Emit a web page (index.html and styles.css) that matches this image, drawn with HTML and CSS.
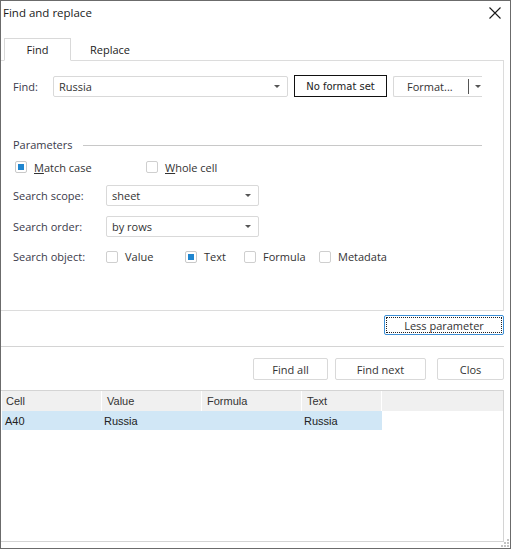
FILE: index.html
```html
<!DOCTYPE html>
<html>
<head>
<meta charset="utf-8">
<link rel="stylesheet" href="styles.css">
</head>
<body>
<div class="window">
  <div class="titlebar">
    <span class="title">Find and replace</span>
    <svg class="close" width="12" height="12" viewBox="0 0 12 12"><path d="M0.5 0.5 L11.5 11.5 M11.5 0.5 L0.5 11.5" stroke="#1a1a1a" stroke-width="1.1" fill="none"/></svg>
  </div>
  <div class="tabs">
    <div class="tab active">Find</div>
    <div class="tab">Replace</div>
  </div>
  <div class="panel">
    <div class="find-row">
      <span class="lbl find-lbl">Find:</span>
      <div class="combo find-combo"><span>Russia</span><i class="arrow"></i></div>
      <div class="btn nofmt">No format set</div>
      <div class="btn fmt"><span class="fmt-text">Format...</span><span class="fmt-sep"></span><i class="arrow"></i></div>
    </div>
    <div class="group-head"><span>Parameters</span><span class="rule"></span></div>
    <div class="check-row">
      <label class="chk w130"><i class="box on"></i><span><u>M</u>atch case</span></label>
      <label class="chk"><i class="box"></i><span><u>W</u>hole cell</span></label>
    </div>
    <div class="field-row">
      <span class="lbl flabel">Search scope:</span>
      <div class="combo scombo"><span>sheet</span><i class="arrow"></i></div>
    </div>
    <div class="field-row">
      <span class="lbl flabel">Search order:</span>
      <div class="combo scombo"><span>by rows</span><i class="arrow"></i></div>
    </div>
    <div class="field-row obj-row">
      <span class="lbl flabel">Search object:</span>
      <label class="chk w78"><i class="box"></i><span>Value</span></label>
      <label class="chk w60"><i class="box on"></i><span>Text</span></label>
      <label class="chk w75"><i class="box"></i><span>Formula</span></label>
      <label class="chk"><i class="box"></i><span>Metadata</span></label>
    </div>
  </div>
  <div class="less-row">
    <div class="btn less"><span class="focus">Less parameter</span></div>
  </div>
  <div class="actions">
    <div class="btn act findall">Find all</div>
    <div class="btn act findnext">Find next</div>
    <div class="btn act clos">Clos</div>
  </div>
  <div class="table">
    <div class="thead">
      <div class="th c1">Cell</div>
      <div class="th c2">Value</div>
      <div class="th c3">Formula</div>
      <div class="th c4">Text</div>
      <div class="th c5"></div>
    </div>
    <div class="tr sel">
      <div class="td c1">A40</div>
      <div class="td c2">Russia</div>
      <div class="td c3"></div>
      <div class="td c4">Russia</div>
    </div>
  </div>
  <svg class="grip" width="8" height="8" viewBox="0 0 8 8"><rect x="6" y="0" width="2" height="2" fill="#c4c4c4"/><rect x="3" y="3" width="2" height="2" fill="#c4c4c4"/><rect x="6" y="3" width="2" height="2" fill="#c4c4c4"/><rect x="0" y="6" width="2" height="2" fill="#c4c4c4"/><rect x="3" y="6" width="2" height="2" fill="#c4c4c4"/><rect x="6" y="6" width="2" height="2" fill="#c4c4c4"/></svg>
</div>
</body>
</html>
```
FILE: styles.css
```css
* { box-sizing: border-box; }
html, body { margin: 0; padding: 0; background: #fff; }
body { font-family: "Open Sans", "Noto Sans", sans-serif; font-size: 11px; color: #333; }

.window {
  position: relative;
  width: 511px;
  height: 549px;
  border: 1px solid #6b6b6b;
  background: #fff;
  display: flex;
  flex-direction: column;
}

.titlebar {
  height: 26px;
  display: flex;
  align-items: center;
  justify-content: space-between;
  padding: 0 9px 4px 2px;
}
.title { font-size: 11.5px; color: #1a1a1a; }
.close { display: block; margin-top: 1px; }

.tabs {
  margin-top: 11px;
  display: flex;
  height: 23px;
  width: 503px;
  border-bottom: 1px solid #dcdcdc;
  padding-left: 3px;
}
.tab {
  width: 67px;
  height: 23px;
  display: flex;
  align-items: center;
  justify-content: center;
  color: #222;
}
.tab.active {
  border: 1px solid #d9d9d9;
  border-bottom: 1px solid #fff;
  background: #fff;
  height: 23px;
  margin-bottom: -1px;
}
.tab + .tab { width: 78px; }

.panel {
  width: 503px;
  height: 250px;
  border-right: 1px solid #dcdcdc;
  border-bottom: 1px solid #dcdcdc;
  padding: 14px 0 0 12px;
  display: flex;
  flex-direction: column;
}

.lbl { color: #3a3a4a; }

.find-row { display: flex; align-items: center; height: 22px; width: 469px; overflow: hidden; }
.find-lbl { width: 40px; flex-shrink: 0; }

.combo {
  height: 21px;
  border: 1px solid #d9d9d9;
  border-radius: 2px;
  display: flex;
  align-items: center;
  justify-content: space-between;
  padding: 0 7px 0 5px;
  color: #333;
  flex-shrink: 0;
}
.find-combo { width: 235px; }
.arrow {
  display: block;
  width: 0; height: 0;
  border-left: 3px solid transparent;
  border-right: 3px solid transparent;
  border-top: 3px solid #555;
}

.btn {
  border: 1px solid #d9d9d9;
  border-radius: 2px;
  display: flex;
  align-items: center;
  justify-content: center;
  color: #333;
  background: #fff;
}
.nofmt {
  margin-left: 6px;
  width: 93px;
  height: 22px;
  flex-shrink: 0;
  border: 1px solid #111;
  border-radius: 0;
  font-family: "DejaVu Sans", sans-serif;
  font-size: 10px;
  color: #222;
}
.fmt {
  margin-left: 6px;
  width: 96px;
  height: 21px;
  justify-content: flex-start;
  padding-left: 13px;
  flex-shrink: 0;
  border-right: none;
  border-radius: 2px 0 0 2px;
}
.fmt-text { width: 61px; }
.fmt-sep { width: 1px; height: 15px; background: #555; margin-right: 6px; }

.group-head {
  margin-top: 41px;
  display: flex;
  align-items: center;
  width: 469px;
  color: #3a3a4a;
  line-height: 14px;
}
.rule { flex: 1; height: 1px; background: #c8c8c8; margin-left: 10px; }

.check-row { display: flex; align-items: center; margin-top: 7px; height: 16px; }
.chk { display: flex; align-items: center; color: #333; }
.chk u { text-decoration: underline; }
.w130 { width: 131px; }
.w78 { width: 78px; }
.w60 { width: 60px; }
.w75 { width: 75px; }
.box {
  display: block;
  width: 12px; height: 12px;
  border: 1px solid #cfcfcf;
  border-radius: 2px;
  margin: 0 7px 0 2px;
  background: #fff;
}
.box.on { border-color: #c9c9c9; padding: 2px; }
.box.on::after { content: ""; display: block; width: 6px; height: 6px; background: #1f86d0; }

.field-row { display: flex; align-items: center; margin-top: 10px; height: 21px; }
.field-row + .field-row { margin-top: 10px; }
.field-row.obj-row { margin-top: 9px; }
.flabel { width: 93px; }
.scombo { width: 153px; }
.obj-row .box { margin-left: 0; margin-right: 7px; }
.w60 .box { margin-left: 1px; }

.less-row {
  width: 503px;
  height: 36px;
  border-bottom: 1px solid #d4d4d4;
  display: flex;
  justify-content: flex-end;
  padding-top: 4px;
}
.less {
  width: 120px;
  height: 20px;
  border: 1px solid #3c8fd6;
  border-radius: 2px;
  padding: 1px;
}
.focus {
  width: 100%; height: 100%;
  border: 1px dotted #222;
  display: flex; align-items: center; justify-content: center;
}

.actions {
  width: 503px;
  display: flex;
  justify-content: flex-end;
  gap: 7px;
  padding-top: 11px;
  height: 43px;
}
.act { height: 22px; }
.findall { width: 75px; }
.findnext { width: 91px; }
.clos { width: 67px; margin-left: 4px; }

.table {
  width: 503px;
  flex: 1;
  border: 1px solid #d4d4d4;
  border-left: none;
  margin-bottom: 6px;
  padding-left: 1px;
  font-family: "Liberation Sans", Arial, sans-serif;
  font-size: 11px;
  color: #222;
}
.thead { display: flex; height: 20px; background: #f0f0f0; }
.th { height: 20px; display: flex; align-items: center; padding-left: 5px; border-right: 1px solid #fff; color: #333; }
.th.c1 { padding-left: 4px; }
.c1 { width: 100px; }
.c2 { width: 100px; }
.c3 { width: 100px; }
.c4 { width: 80px; }
.c5 { flex: 1; border-right: none; }
.tr { display: flex; height: 19px; }
.tr.sel .td { background: #d1e7f6; }
.td { height: 19px; display: flex; align-items: center; padding-left: 2px; }
.td.c1 { padding-left: 3px; }

.grip { position: absolute; right: 1px; bottom: 1px; }
```
